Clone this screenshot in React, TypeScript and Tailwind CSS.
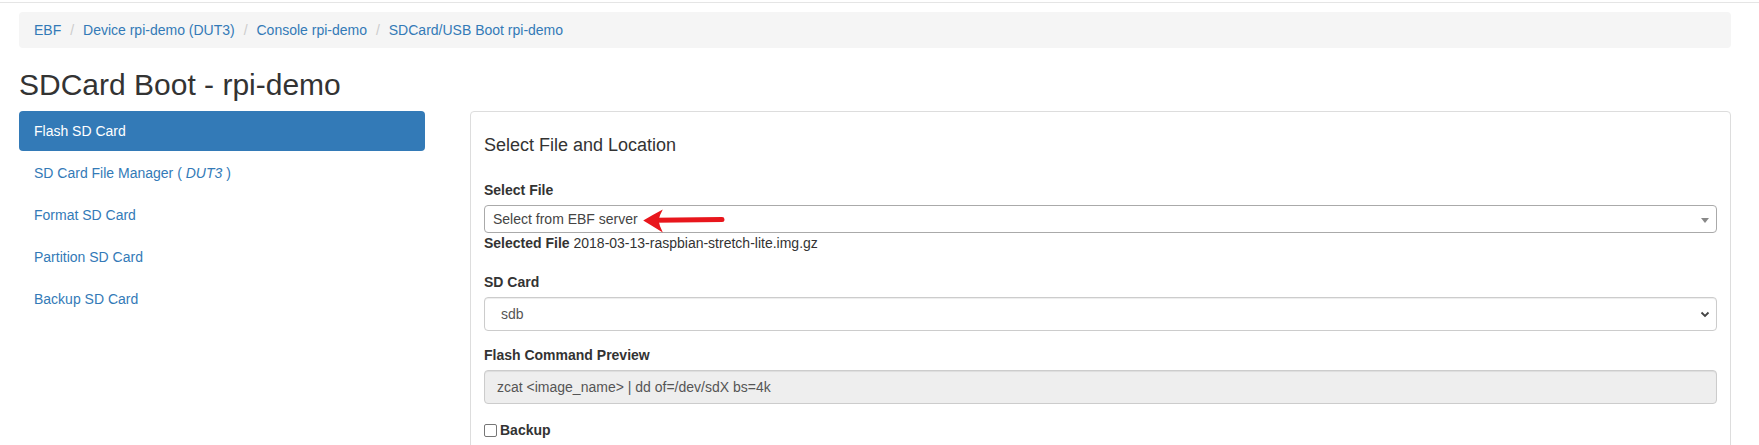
import * as React from 'react';

const crumbs = ['EBF', 'Device rpi-demo (DUT3)', 'Console rpi-demo', 'SDCard/USB Boot rpi-demo'];

function Breadcrumb() {
  return (
    <ol className="mt-[9px] flex h-[36px] items-center rounded-[4px] bg-[#f5f5f5] px-[15px] leading-[20px]">
      {crumbs.map((c, i) => (
        <li key={c} className="flex items-center">
          {i > 0 && <span className="ml-[4px] px-[5px] text-[#ccc]">/{'\u00a0'}</span>}
          <a className="text-[#337ab7]">{c}</a>
        </li>
      ))}
    </ol>
  );
}

function SideNav() {
  const items: React.ReactNode[] = [
    'Flash SD Card',
    <>
      SD Card File Manager ( <em>DUT3</em> )
    </>,
    'Format SD Card',
    'Partition SD Card',
    'Backup SD Card',
  ];
  return (
    <ul className="flex w-[406px] shrink-0 flex-col">
      {items.map((item, i) => (
        <li key={i} className={i > 0 ? 'mt-[2px]' : ''}>
          <a
            className={
              i === 0
                ? 'block rounded-[4px] bg-[#337ab7] px-[15px] py-[10px] leading-[20px] text-white'
                : 'block rounded-[4px] px-[15px] py-[10px] leading-[20px] text-[#337ab7]'
            }
          >
            {item}
          </a>
        </li>
      ))}
    </ul>
  );
}

function RedArrow() {
  // annotation drawn over the select box
  return (
    <svg className="absolute left-[150px] top-0" width="92" height="28" viewBox="0 0 92 28">
      <line x1="20" y1="14.3" x2="87" y2="13.6" stroke="#e8161c" strokeWidth="5" strokeLinecap="round" />
      <path d="M8.2 14.6 Q18 8.5 27.8 3.4 Q24.5 9 23.5 14.4 Q24.5 20 27.8 26.6 Q18 20.5 8.2 14.6 Z" fill="#e8161c" />
    </svg>
  );
}

export default function App() {
  return (
    <div className="min-h-screen bg-white font-['Liberation_Sans',Arial,sans-serif] text-[14px] leading-[20px] text-[#333]">
      <div className="h-[3px] border-b border-[#e5e5e5]" />
      <div className="pl-[19px] pr-[28px]">
        <Breadcrumb />
        <h2 className="mt-[20px] mb-[10px] text-[30px] leading-[33px] font-normal">SDCard Boot - rpi-demo</h2>

        <div className="flex">
          <SideNav />

          <div className="ml-[45px] flex-1 rounded-[4px] border border-[#ddd] px-[13px] pt-[23px] pb-[40px]">
            <h4 className="text-[18px] leading-[20px] font-normal">Select File and Location</h4>

            <label className="mt-[25px] mb-[5px] block font-bold">Select File</label>
            <div className="relative flex h-[28px] items-center rounded-[4px] border border-[#aaa] pl-[8px] text-[#444]">
              <span>Select from EBF server</span>
              <RedArrow />
              <span className="absolute right-[7px] top-[12px] h-0 w-0 border-x-[4px] border-t-[5px] border-x-transparent border-t-[#888]" />
            </div>
            <div>
              <b>Selected File</b> 2018-03-13-raspbian-stretch-lite.img.gz
            </div>

            <label className="mt-[19px] mb-[5px] block font-bold">SD Card</label>
            <div className="flex h-[34px] items-center justify-between rounded-[4px] border border-[#ccc] pl-[16px] pr-[5px] text-[#555] shadow-[inset_0_1px_1px_rgba(0,0,0,0.075)]">
              <span>sdb</span>
              <svg width="10" height="7" viewBox="0 0 10 7" className="mr-[1px]">
                <path d="M1.5 1.5 L5 5 L8.5 1.5" fill="none" stroke="#444" strokeWidth="1.8" />
              </svg>
            </div>

            <label className="mt-[14px] mb-[5px] block font-bold">Flash Command Preview</label>
            <div className="flex h-[34px] items-center rounded-[4px] border border-[#ccc] bg-[#eee] px-[12px] text-[#555] shadow-[inset_0_1px_1px_rgba(0,0,0,0.075)]">
              zcat &lt;image_name&gt; | dd of=/dev/sdX bs=4k
            </div>

            <div className="mt-[16px] flex items-center">
              <span className="h-[13px] w-[13px] rounded-[2px] border border-[#767676] bg-white" />
              <span className="ml-[3px] font-bold">Backup</span>
            </div>
          </div>
        </div>
      </div>
    </div>
  );
}
